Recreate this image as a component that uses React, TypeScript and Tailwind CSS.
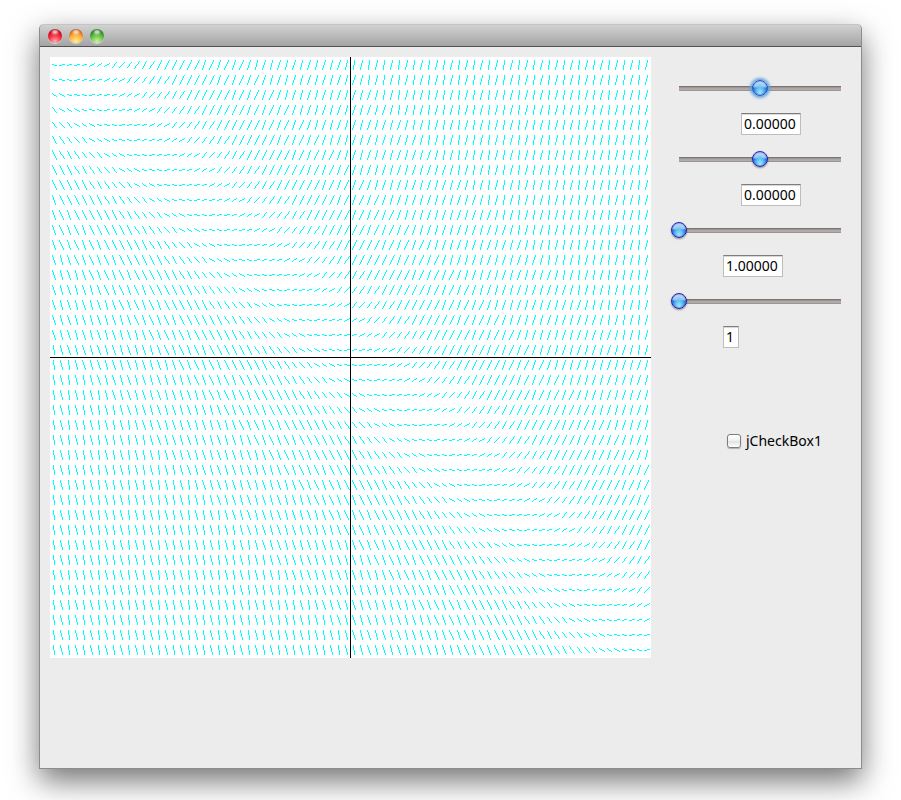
import React, { useState } from "react";

const SIZE = 601;
const UNIT = 60;

// Pixel-exact line between two cells, as a run of unit squares.
function plotLine(x0: number, y0: number, x1: number, y1: number): string {
  const dx = Math.abs(x1 - x0);
  const dy = Math.abs(y1 - y0);
  const steps = Math.max(dx, dy, 1);
  let d = "";
  for (let i = 0; i <= steps; i++) {
    const x = x0 + Math.sign(x1 - x0) * Math.floor((i * dx + (steps >> 1)) / steps);
    const y = y0 + Math.sign(y1 - y0) * Math.floor((i * dy + (steps >> 1)) / steps);
    d += `M${x} ${y}h1v1h-1z`;
  }
  return d;
}

// Direction field of dy/dx = x + y.
function buildField(): string {
  let d = "";
  for (let row = 0; row < 40; row++) {
    for (let col = 0; col < 80; col++) {
      const cx = 4 + col * 7.5;
      const cy = 8 + row * 15;
      const slope = (cx - cy) / UNIT - 0.05;
      const steep = Math.abs(slope);
      const reach = Math.min(2 + 0.5 * Math.min(steep, 1), 4.7 / Math.max(steep, 0.01));
      const hy = Math.sign(slope) * Math.min(4.7, Math.max(reach * steep, 0.1));
      const hx = Math.max(reach, 0.52);
      const left = Math.min(hx, 2);
      const right = hx >= 2 ? 2.5 : hx;
      d += plotLine(
        Math.floor(cx - left),
        Math.floor(cy + hy),
        Math.floor(cx + right),
        Math.floor(cy - hy),
      );
    }
  }
  return d;
}

const FIELD = buildField();

function Light({ label, tone }: { label: string; tone: string }) {
  return (
    <button
      type="button"
      aria-label={label}
      className={`relative h-3.5 w-3.5 overflow-hidden rounded-full shadow-[0_1px_0_#d8d8d8] ${tone}`}
    >
      <span className="absolute left-1 top-px h-1 w-1.5 rounded-full bg-white/80 blur-[1px]" />
    </button>
  );
}

const THUMB =
  "[&::-webkit-slider-thumb]:h-4 [&::-webkit-slider-thumb]:w-4 [&::-webkit-slider-thumb]:appearance-none [&::-webkit-slider-thumb]:rounded-full [&::-webkit-slider-thumb]:border [&::-webkit-slider-thumb]:bg-[radial-gradient(ellipse_at_50%_100%,#b4f6ff_0%,#6cc4f4_35%,transparent_65%),linear-gradient(#d4e6fa_0%,#a4cdf4_40%,#2d8be0_50%,#4aa6ea_100%)]";

const PLAIN =
  "[&::-webkit-slider-thumb]:border-[#2a20ae] [&::-webkit-slider-thumb]:shadow-[0_1px_2px_rgba(0,0,0,0.4),inset_0_0_2px_#1450c8]";
const GLOW =
  "[&::-webkit-slider-thumb]:border-[#2558c4] [&::-webkit-slider-thumb]:shadow-[0_0_3px_2px_#5fa2dc,inset_0_0_2px_#1450c8]";

type ControlProps = {
  label: string;
  start: number;
  text: string;
  boxClass: string;
  glow?: boolean;
};

function Control({ label, start, text, boxClass, glow }: ControlProps) {
  const [value, setValue] = useState(start);
  const [entry, setEntry] = useState(text);
  return (
    <div className="flex flex-col gap-4">
      <input
        type="range"
        aria-label={label}
        min={0}
        max={100}
        value={value}
        onChange={(e) => setValue(Number(e.target.value))}
        className={`h-[18px] w-full appearance-none bg-[linear-gradient(#6e6462_0%,#8c8481_20%,#aaa6a5_40%,#b2aeae_80%,#857c7a_100%)] bg-[length:calc(100%-16px)_5px] bg-center bg-no-repeat outline-none ${THUMB} ${glow ? GLOW : PLAIN}`}
      />
      <input
        type="text"
        aria-label={`${label} value`}
        value={entry}
        onChange={(e) => setEntry(e.target.value)}
        className={`h-[22px] border border-[#bdbdbd] border-t-[#7d7d7d] bg-white px-0.5 pb-0.5 text-sm text-black shadow-[inset_0_1px_0_#d8d8d8] outline-none ${boxClass}`}
      />
    </div>
  );
}

export default function App() {
  const [checked, setChecked] = useState(false);
  return (
    <div className="flex min-h-screen flex-col overflow-hidden bg-white px-[39px] pb-[31px] pt-6 font-['Noto_Sans',sans-serif]">
      <main className="flex grow flex-col rounded-t-[5px] border border-t-0 border-[#8c8c8c] bg-[#ececec] shadow-[0_12px_30px_rgba(0,0,0,0.55)]">
        <header className="flex h-[23px] items-center gap-[7px] rounded-t-[5px] border-b border-[#515151] bg-linear-to-b from-[#d4d4d4] to-[#a4a4a4] px-2 pt-0.5 shadow-[inset_0_1px_0_#c4c4c4]">
          <Light
            label="Close"
            tone="bg-[radial-gradient(circle_at_50%_90%,#ffb0b4_0%,#f4303e_45%,#d00a1c_70%,#6c1218_100%)]"
          />
          <Light
            label="Minimize"
            tone="bg-[radial-gradient(circle_at_50%_90%,#fff08c_0%,#fcb440_45%,#e0741c_70%,#7c3410_100%)]"
          />
          <Light
            label="Zoom"
            tone="bg-[radial-gradient(circle_at_50%_90%,#ccf8a0_0%,#6cc04c_45%,#2c8c24_70%,#145014_100%)]"
          />
        </header>
        <div className="flex items-start gap-5 pb-10 pl-2.5 pr-3 pt-2.5">
          <svg
            viewBox={`0 0 ${SIZE} ${SIZE}`}
            role="img"
            aria-label="Direction field"
            shapeRendering="crispEdges"
            className="min-w-0 flex-1 bg-white"
          >
            <path d={FIELD} fill="#00ffff" />
            <path d="M300 0h1v601h-1z M0 300h601v1h-601z" fill="#000" />
          </svg>
          <aside className="w-[178px] shrink-0 pt-[22px]">
            <div className="flex flex-col gap-[15px]">
              <Control label="X offset" start={50} text="0.00000" boxClass="ml-[70px] w-[60px]" glow />
              <Control label="Y offset" start={50} text="0.00000" boxClass="ml-[70px] w-[60px]" />
              <Control label="Scale" start={0} text="1.00000" boxClass="ml-[52px] w-[60px]" />
              <Control label="Step" start={0} text="1" boxClass="ml-[52px] w-4" />
            </div>
            <label className="ml-14 mt-[83px] flex h-5 items-center gap-[5px] text-sm text-black">
              <input
                type="checkbox"
                checked={checked}
                onChange={(e) => setChecked(e.target.checked)}
                className="h-3.5 w-3.5 shrink-0 appearance-none rounded-[3px] border border-[#7c7c7c] bg-[linear-gradient(#ffffff_0%,#f2f2f2_45%,#e2e2e2_55%,#ffffff_100%)] shadow-[0_1px_1px_rgba(0,0,0,0.25)] checked:bg-[linear-gradient(#9cc8f4,#3c8ce0)]"
              />
              jCheckBox1
            </label>
          </aside>
        </div>
      </main>
    </div>
  );
}
